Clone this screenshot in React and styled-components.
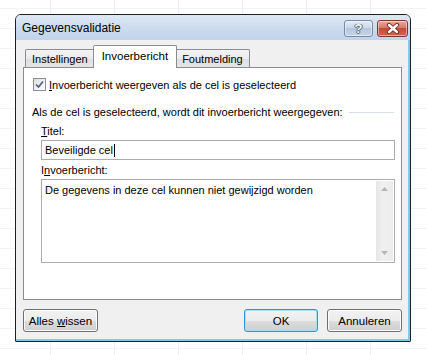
import React from "react";
import styled, { createGlobalStyle } from "styled-components";

const GlobalStyle = createGlobalStyle`
  html, body { margin: 0; padding: 0; }
  body {
    width: 426px;
    height: 355px;
    overflow: hidden;
    background-color: #fff;
    background-image:
      linear-gradient(to right, #eceef2 1px, transparent 1px),
      linear-gradient(to bottom, #f2f3f6 1px, transparent 1px);
    background-size: 64px 20px;
    background-position: 50px 0, 0 8px;
    font-family: "Liberation Sans", Arial, sans-serif;
    font-size: 11px;
    color: #000;
  }
`;

const Page = styled.div`
  padding: 14px 0 0 15px;
`;

const Dialog = styled.div`
  box-sizing: border-box;
  width: 396px;
  height: 328px;
  border: 1px solid #1f1f1f;
  border-radius: 6px 6px 1px 1px;
  overflow: hidden;
  display: flex;
  flex-direction: column;
  background: #f0f0f0;
`;

const TitleBar = styled.div`
  flex: none;
  height: 25px;
  display: flex;
  align-items: center;
  padding: 0 2px 0 6px;
  background: linear-gradient(to bottom, #dfe9f5 0%, #cfdcee 45%, #c0d3eb 100%);
`;

const Caption = styled.span`
  font-size: 12px;
  color: #000;
  flex: 1;
`;

const CaptionButtons = styled.div`
  display: flex;
  gap: 4px;
  margin-top: 1px;
`;

const CaptionButton = styled.div`
  box-sizing: border-box;
  width: ${(p) => p.$w}px;
  height: 17px;
  border-radius: 3px;
  display: flex;
  align-items: center;
  justify-content: center;
  border: 1px solid ${(p) => (p.$close ? "#7d3a33" : "#7b8aa2")};
  background: ${(p) =>
    p.$close
      ? "linear-gradient(to bottom, #e9a99c 0%, #d9786a 45%, #c7493a 50%, #d16656 100%)"
      : "linear-gradient(to bottom, #e4ecf6 0%, #cbd8ea 45%, #b5c6de 50%, #c6d5e9 100%)"};
  box-shadow: inset 0 0 0 1px rgba(255, 255, 255, 0.45);
`;

const HelpGlyph = styled.span`
  font-family: "Liberation Sans", Arial, sans-serif;
  font-weight: bold;
  font-size: 13px;
  line-height: 13px;
  color: #fff;
  text-shadow: 0 0 1px #3e4f6a, 1px 0 0 #5a6b86, -1px 0 0 #5a6b86, 0 1px 0 #5a6b86;
`;

const Body = styled.div`
  flex: 1;
  display: flex;
  flex-direction: column;
  padding: 5px 6px 0 7px;
  border-right: 2px solid #7fcaee;
  border-bottom: 2px solid #7fcaee;
`;

const TabStrip = styled.div`
  display: flex;
  align-items: flex-end;
  height: 22px;
  padding-left: 2px;
  position: relative;
  z-index: 1;
`;

const Tab = styled.div`
  box-sizing: border-box;
  position: relative;
  z-index: ${(p) => (p.$active ? 2 : 1)};
  height: ${(p) => (p.$active ? 23 : 18)}px;
  margin: 0 ${(p) => (p.$active ? -2 : 0)}px ${(p) => (p.$active ? -1 : 0)}px;
  padding: ${(p) => (p.$active ? "0 8px 2px" : "1px 6px 0")};
  display: flex;
  align-items: center;
  border: 1px solid #898c95;
  border-bottom: none;
  border-radius: 2px 2px 0 0;
  background: ${(p) =>
    p.$active ? "#fff" : "linear-gradient(to bottom, #f3f3f3 0%, #ebebeb 50%, #dedede 51%, #e5e5e5 100%)"};
  font-size: ${(p) => (p.$active ? 11.5 : 11)}px;
`;

const Panel = styled.div`
  box-sizing: border-box;
  height: 233px;
  border: 1px solid #898c95;
  background: #fff;
  display: flex;
  flex-direction: column;
`;

const CheckRow = styled.label`
  display: flex;
  align-items: center;
  gap: 3px;
  height: 13px;
  margin: 10px 0 0 9px;
`;

const CheckBox = styled.span`
  box-sizing: border-box;
  width: 13px;
  height: 13px;
  border: 1px solid #8e8f8f;
  background: linear-gradient(135deg, #dcdcdc 0%, #f4f4f4 60%, #ffffff 100%);
  display: flex;
  align-items: center;
  justify-content: center;
`;

const GroupRow = styled.div`
  display: flex;
  align-items: center;
  height: 14px;
  margin-top: 14px;
  padding: 0 7px 0 8px;
`;

const Rule = styled.div`
  flex: 1;
  height: 1px;
  margin-left: 6px;
  background: #d5dfe5;
`;

const FieldLabel = styled.div`
  height: 14px;
  line-height: 14px;
  margin-top: ${(p) => p.$gap}px;
  padding-left: 17px;
`;

const Key = styled.u`
  text-decoration: underline;
  text-underline-offset: 1px;
`;

const TextBox = styled.div`
  box-sizing: border-box;
  height: 20px;
  margin: 2px 6px 0 17px;
  border: 1px solid #abadb3;
  background: #fff;
  display: flex;
  align-items: center;
  padding-left: 3px;
`;

const Caret = styled.span`
  display: inline-block;
  width: 1px;
  height: 13px;
  background: #000;
  margin-left: 1px;
`;

const MessageBox = styled.div`
  box-sizing: border-box;
  height: 84px;
  margin: 2px 6px 0 17px;
  border: 1px solid #abadb3;
  background: #fff;
  display: flex;
`;

const MessageText = styled.div`
  flex: 1;
  padding: 3px 3px;
  line-height: 14px;
`;

const ScrollBar = styled.div`
  width: 17px;
  margin: 1px;
  background: linear-gradient(to right, #e6e6e6, #f0f0f0 40%, #ececec);
  display: flex;
  flex-direction: column;
  justify-content: space-between;
  align-items: center;
  padding: 6px 0 6px;
  box-sizing: border-box;
`;

const Footer = styled.div`
  display: flex;
  justify-content: space-between;
  margin-top: 9px;
  height: 23px;
`;

const ButtonGroup = styled.div`
  display: flex;
  gap: 9px;
`;

const Button = styled.button`
  box-sizing: border-box;
  width: ${(p) => p.$w}px;
  height: 23px;
  padding: 0;
  font-family: "Liberation Sans", Arial, sans-serif;
  font-size: 11.5px;
  color: #000;
  border-radius: 3px;
  border: 1px solid ${(p) => (p.$default ? "#3592d3" : "#707070")};
  background: linear-gradient(to bottom, #f2f2f2 0%, #ebebeb 50%, #dddddd 51%, #cfcfcf 100%);
  box-shadow: inset 0 0 0 1px ${(p) => (p.$default ? "#a6def7" : "#fcfcfc")};
`;

function CheckMark() {
  return (
    <svg width="9" height="9" viewBox="0 0 9 9">
      <path d="M1 4.5 L3.5 7 L8 1.5" fill="none" stroke="#4a5f8c" strokeWidth="1.7" />
    </svg>
  );
}

function CloseGlyph() {
  return (
    <svg width="14" height="11" viewBox="0 0 14 11">
      <path d="M3 2 L11 9 M11 2 L3 9" stroke="#6a2a22" strokeWidth="4.2" strokeLinecap="round" />
      <path d="M3 2 L11 9 M11 2 L3 9" stroke="#ffffff" strokeWidth="2.4" strokeLinecap="round" />
    </svg>
  );
}

function Arrow({ up }) {
  return (
    <svg width="7" height="4" viewBox="0 0 7 4">
      <path d={up ? "M0 4 L3.5 0 L7 4 Z" : "M0 0 L3.5 4 L7 0 Z"} fill="#b4b4b4" />
    </svg>
  );
}

export default function App() {
  return (
    <>
      <GlobalStyle />
      <Page>
        <Dialog>
          <TitleBar>
            <Caption>Gegevensvalidatie</Caption>
            <CaptionButtons>
              <CaptionButton $w={29}>
                <HelpGlyph>?</HelpGlyph>
              </CaptionButton>
              <CaptionButton $w={31} $close>
                <CloseGlyph />
              </CaptionButton>
            </CaptionButtons>
          </TitleBar>
          <Body>
            <TabStrip>
              <Tab>Instellingen</Tab>
              <Tab $active>Invoerbericht</Tab>
              <Tab>Foutmelding</Tab>
            </TabStrip>
            <Panel>
              <CheckRow>
                <CheckBox>
                  <CheckMark />
                </CheckBox>
                <span>
                  <Key>I</Key>nvoerbericht weergeven als de cel is geselecteerd
                </span>
              </CheckRow>
              <GroupRow>
                <span>Als de cel is geselecteerd, wordt dit invoerbericht weergegeven:</span>
                <Rule />
              </GroupRow>
              <FieldLabel $gap={5}>
                <Key>T</Key>itel:
              </FieldLabel>
              <TextBox>
                Beveiligde cel
                <Caret />
              </TextBox>
              <FieldLabel $gap={3}>
                I<Key>n</Key>voerbericht:
              </FieldLabel>
              <MessageBox>
                <MessageText>De gegevens in deze cel kunnen niet gewijzigd worden</MessageText>
                <ScrollBar>
                  <Arrow up />
                  <Arrow />
                </ScrollBar>
              </MessageBox>
            </Panel>
            <Footer>
              <Button $w={75}>
                Alles <Key>w</Key>issen
              </Button>
              <ButtonGroup>
                <Button $w={74} $default>
                  OK
                </Button>
                <Button $w={75}>Annuleren</Button>
              </ButtonGroup>
            </Footer>
          </Body>
        </Dialog>
      </Page>
    </>
  );
}
